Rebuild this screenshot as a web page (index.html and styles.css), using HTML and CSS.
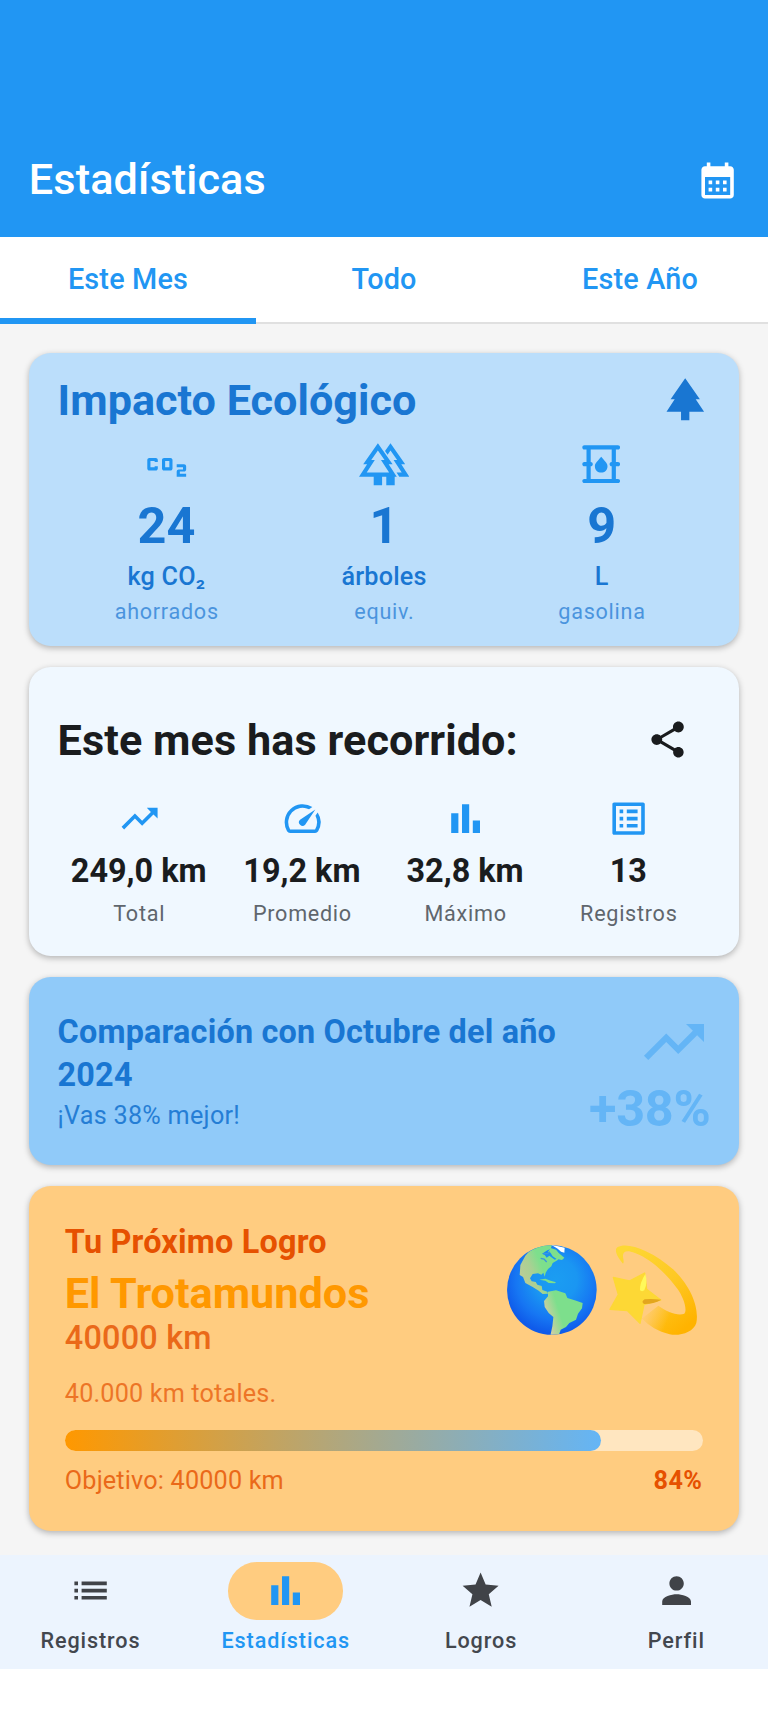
FILE: index.html
```html
<!DOCTYPE html>
<html lang="es">
<head>
<meta charset="utf-8">
<title>Estadísticas</title>
<link rel="stylesheet" href="styles.css">
</head>
<body>
<header class="appbar">
  <h1 class="appbar-title">Estadísticas</h1>
  <svg class="icon" viewBox="0 0 24 24"><path d="M19 4h-1V2h-2v2H8V2H6v2H5c-1.11 0-1.99.9-1.99 2L3 20c0 1.1.89 2 2 2h14c1.1 0 2-.9 2-2V6c0-1.1-.9-2-2-2zm0 16H5V10h14v10zM9 14H7v-2h2v2zm4 0h-2v-2h2v2zm4 0h-2v-2h2v2zm-8 4H7v-2h2v2zm4 0h-2v-2h2v2zm4 0h-2v-2h2v2z"/></svg>
</header>
<nav class="tabs">
  <a class="tab active">Este Mes</a>
  <a class="tab">Todo</a>
  <a class="tab">Este Año</a>
</nav>
<main class="content">
  <section class="card eco">
    <div class="card-head">
      <h2 class="card-title">Impacto Ecológico</h2>
      <svg class="icon icon-l" viewBox="0 0 24 24"><path d="M17 12h2L12 2 5.05 12H7l-3.9 6h6.92v4h3.96v-4H21z"/></svg>
    </div>
    <div class="cols">
      <div class="col">
        <svg class="icon icon-l" viewBox="0 0 24 24"><path d="M14 9h-3c-.55 0-1 .45-1 1v4c0 .55.45 1 1 1h3c.55 0 1-.45 1-1v-4c0-.55-.45-1-1-1zm-.5 4.5h-2v-3h2v3zM8 13v1c0 .55-.45 1-1 1H4c-.55 0-1-.45-1-1v-4c0-.55.45-1 1-1h3c.55 0 1 .45 1 1v1H6.5v-.5h-2v3h2V13H8zm12.500 2.500h-2v1h3V18H17v-2.500c0-.55.45-1 1-1h2v-1h-3V12h3.500c.55 0 1 .45 1 1v1.500c0 .55-.45 1-1 1z"/></svg>
        <div class="eco-value">24</div>
        <div class="eco-unit">kg CO₂</div>
        <div class="eco-label">ahorrados</div>
      </div>
      <div class="col">
        <svg class="icon icon-l" viewBox="0 0 24 24"><path fill-rule="evenodd" d="M16 12L9 2 2 12h1.860L0 18h7v4h4v-4h7l-3.860-6zM3.660 16L7.530 10H5.840L9 5.490 12.160 10h-1.690l3.870 6z"/><path fill-rule="evenodd" d="M20.140 12H22L15 2l-2.610 3.730 1.220 1.740L15 5.490 18.160 10h-1.690l3.870 6h-2.450l1.290 2H24zM13 17.500h4V22h-4z"/></svg>
        <div class="eco-value">1</div>
        <div class="eco-unit">árboles</div>
        <div class="eco-label">equiv.</div>
      </div>
      <div class="col">
        <svg class="icon icon-l" viewBox="0 0 24 24"><path d="M20 13c.55 0 1-.45 1-1s-.45-1-1-1h-1V5h1c.55 0 1-.45 1-1s-.45-1-1-1H4c-.55 0-1 .45-1 1s.45 1 1 1h1v6H4c-.55 0-1 .45-1 1s.45 1 1 1h1v6H4c-.55 0-1 .45-1 1s.45 1 1 1h16c.55 0 1-.45 1-1s-.45-1-1-1h-1v-6h1zm-3 6H7v-6c.55 0 1-.45 1-1s-.45-1-1-1V5h10v6c-.55 0-1 .45-1 1s.45 1 1 1v6z"/><path d="M12 16c1.660 0 3-1.320 3-2.950 0-1.300-.52-1.670-3-4.550-2.470 2.860-3 3.240-3 4.550C9 14.680 10.340 16 12 16z"/></svg>
        <div class="eco-value">9</div>
        <div class="eco-unit">L</div>
        <div class="eco-label">gasolina</div>
      </div>
    </div>
  </section>

  <section class="card month">
    <div class="card-head">
      <h2 class="card-title">Este mes has recorrido:</h2>
      <svg class="icon share" viewBox="0 0 24 24"><path d="M18 16.080c-.76 0-1.440.3-1.960.77L8.910 12.700c.05-.23.09-.46.09-.7s-.04-.47-.09-.7l7.050-4.110c.54.5 1.250.81 2.040.81 1.660 0 3-1.340 3-3s-1.340-3-3-3-3 1.340-3 3c0 .24.04.47.09.7L8.040 9.810C7.500 9.310 6.790 9 6 9c-1.660 0-3 1.340-3 3s1.340 3 3 3c.79 0 1.500-.31 2.040-.81l7.120 4.160c-.05.21-.08.43-.08.65 0 1.610 1.310 2.920 2.920 2.920s2.920-1.310 2.920-2.920-1.310-2.920-2.920-2.920z"/></svg>
    </div>
    <div class="cols">
      <div class="col">
        <svg class="icon" viewBox="0 0 24 24"><path d="M16 6l2.290 2.290-4.880 4.880-4-4L2 16.590 3.410 18l6-6 4 4 6.300-6.290L22 12V6z"/></svg>
        <div class="stat-value">249,0 km</div>
        <div class="stat-label">Total</div>
      </div>
      <div class="col">
        <svg class="icon" viewBox="0 0 24 24"><path d="M20.380 8.570l-1.230 1.850a8 8 0 0 1-.22 7.580H5.070A8 8 0 0 1 15.580 6.850l1.850-1.230A10 10 0 0 0 3.350 19a2 2 0 0 0 1.720 1h13.850a2 2 0 0 0 1.740-1 10 10 0 0 0-.27-10.440zm-9.790 6.840a2 2 0 0 0 2.830 0l5.660-8.490-8.490 5.660a2 2 0 0 0 0 2.830z"/></svg>
        <div class="stat-value">19,2 km</div>
        <div class="stat-label">Promedio</div>
      </div>
      <div class="col">
        <svg class="icon" viewBox="0 0 24 24"><path d="M4 9h4v11H4zm12 4h4v7h-4zm-6-9h4v16h-4z"/></svg>
        <div class="stat-value">32,8 km</div>
        <div class="stat-label">Máximo</div>
      </div>
      <div class="col">
        <svg class="icon" viewBox="0 0 24 24"><path d="M11 7h6v2h-6zm0 4h6v2h-6zm0 4h6v2h-6zM7 7h2v2H7zm0 4h2v2H7zm0 4h2v2H7zM20.100 3H3.900c-.5 0-.9.4-.9.9v16.200c0 .4.4.9.9.9h16.200c.4 0 .9-.5.9-.9V3.900c0-.5-.5-.9-.9-.9zM19 19H5V5h14v14z"/></svg>
        <div class="stat-value">13</div>
        <div class="stat-label">Registros</div>
      </div>
    </div>
  </section>

  <section class="card compare">
    <div class="compare-text">
      <h3 class="compare-title">Comparación con Octubre del año 2024</h3>
      <p class="compare-note">¡Vas 38% mejor!</p>
    </div>
    <div class="compare-figure">
      <svg class="icon icon-xl" viewBox="0 0 24 24"><path d="M16 6l2.290 2.290-4.880 4.880-4-4L2 16.590 3.410 18l6-6 4 4 6.300-6.290L22 12V6z"/></svg>
      <div class="compare-value">+38%</div>
    </div>
  </section>

  <section class="card goal">
    <div class="goal-head">
      <div>
        <h3 class="goal-kicker">Tu Próximo Logro</h3>
        <div class="goal-name">El Trotamundos</div>
        <div class="goal-target">40000 km</div>
      </div>
      <svg class="emoji" viewBox="360 190 600 280">
        <defs>
          <radialGradient id="sea" gradientUnits="userSpaceOnUse" cx="515" cy="300" r="160"><stop offset="0" stop-color="#1b9df2"/><stop offset=".4" stop-color="#1a96f2"/><stop offset=".75" stop-color="#1676f3"/><stop offset="1" stop-color="#0f5bea"/></radialGradient>
          <linearGradient id="north" gradientUnits="userSpaceOnUse" x1="408" y1="275" x2="470" y2="250"><stop offset="0" stop-color="#b9cd96"/><stop offset=".5" stop-color="#aad093"/><stop offset="1" stop-color="#7ddf8c"/></linearGradient>
          <linearGradient id="south" gradientUnits="userSpaceOnUse" x1="492" y1="420" x2="530" y2="408"><stop offset="0" stop-color="#cbcfa2"/><stop offset="1" stop-color="#7ddf8c"/></linearGradient>
          <linearGradient id="trail" gradientUnits="userSpaceOnUse" x1="720" y1="210" x2="910" y2="440"><stop offset="0" stop-color="#fdd835"/><stop offset=".55" stop-color="#fec823"/><stop offset="1" stop-color="#ffb300"/></linearGradient>
          <linearGradient id="fade" gradientUnits="userSpaceOnUse" x1="775" y1="395" x2="850" y2="425"><stop offset="0" stop-color="#ffcc80"/><stop offset="1" stop-color="#ffcc80" stop-opacity="0"/></linearGradient>
          <clipPath id="globe"><circle cx="503.500" cy="331" r="134"/></clipPath>
        </defs>
        <circle cx="503.500" cy="331" r="134.500" fill="url(#sea)"/>
        <g clip-path="url(#globe)">
          <path fill="url(#north)" d="M504 195L470 195 440 210 424 228 409 256 407 286 417 292 424 310 446 322 464 333 476 343 492 342 490 336 475 331 473 319 460 315 455 307 443 305 438 296 446 283 462 281 472 285 478 279 482 291 485 279 492 268 502 260 506 250 520 242 526 234 512 240 496 228 488 234 482 226 474 222 490 212 500 208z"/>
          <path fill="#7ddf8c" d="M500 205L516 210 524 220 541 234 534 241 518 238 506 230 500 220 492 216zM466 300L484 297 500 303 516 308 512 311 494 310 484 303z"/>
          <path fill="#fff" d="M501 195L542 204 541 219 531 216 521 207z"/>
          <path fill="none" stroke="#3b97dc" stroke-width="4" d="M470 236l10 2 8 9M478 222l12 0 8-6"/>
          <path fill="url(#south)" d="M492 336L516 332 544 341 550 355 572 362 596 370 594 386 582 402 576 420 556 430 546 442 530 450 524 468 499 468 505 440 508 412 494 400 482 382 480 364 492 350z"/>
        </g>
        <path fill="url(#trail)" d="M717 252c-18-20-28-42-16-50 28-16 100 8 168 68 60 60 76 122 68 160-8 28-50 40-80 34-34-8-62-24-82-48l48-38c26 18 58 32 78 24 10-10-2-50-22-76-30-42-78-88-126-106-26-10-34-4-36 6-1 8 5 20 0 26z"/>
        <path fill="url(#fade)" d="M774 416l4-40 40-6 50 34-8 62-20-4c-28-10-48-26-66-46z"/>
        <path fill="#fdd835" stroke="#fdd835" stroke-width="4" stroke-linejoin="round" d="M688 293l48 11 46-24 6 49 42 32-50 14-12 56-38-38-52-4 25-44z"/>
        <path fill="#fff95a" d="M784 283q8 26-3 49-7 5-13 0-1-22 16-49z"/>
        <path fill="#e3a61d" d="M832 360q-26 14-52 13-10-7 2-14 20-2 50 1z"/>
      </svg>
    </div>
    <p class="goal-note">40.000 km totales.</p>
    <div class="progress"><div class="progress-fill" style="width:84%"></div></div>
    <div class="goal-foot"><span class="goal-aim">Objetivo: 40000 km</span><strong class="goal-percent">84%</strong></div>
  </section>
</main>
<nav class="bottom-nav">
  <a class="nav-item"><span class="pill"><svg class="icon" viewBox="0 0 24 24"><path d="M3 13h2v-2H3v2zm0 4h2v-2H3v2zm0-8h2V7H3v2zm4 4h14v-2H7v2zm0 4h14v-2H7v2zM7 7v2h14V7H7z"/></svg></span><span>Registros</span></a>
  <a class="nav-item selected"><span class="pill"><svg class="icon" viewBox="0 0 24 24"><path d="M4 9h4v11H4zm12 4h4v7h-4zm-6-9h4v16h-4z"/></svg></span><span>Estadísticas</span></a>
  <a class="nav-item"><span class="pill"><svg class="icon" viewBox="0 0 24 24"><path d="M12 17.270L18.180 21l-1.640-7.030L22 9.240l-7.190-.61L12 2 9.190 8.630 2 9.240l5.460 4.730L5.820 21z"/></svg></span><span>Logros</span></a>
  <a class="nav-item"><span class="pill"><svg class="icon" viewBox="0 0 24 24"><path d="M12 12c2.210 0 4-1.790 4-4s-1.790-4-4-4-4 1.790-4 4 1.790 4 4 4zm0 2c-2.670 0-8 1.340-8 4v2h16v-2c0-2.660-5.330-4-8-4z"/></svg></span><span>Perfil</span></a>
</nav>
</body>
</html>
```
FILE: styles.css
```css
* { box-sizing: border-box; }
body {
  margin: 0;
  width: 768px;
  height: 1713px;
  overflow: hidden;
  display: flex;
  flex-direction: column;
  background: #fff;
  font-family: Roboto, "Liberation Sans", sans-serif;
}
h1, h2, h3, p { margin: 0; }
.icon { display: block; width: 43.2px; height: 43.2px; fill: currentColor; flex: none; }
.icon-l { width: 50.4px; height: 50.4px; }
.icon-xl { width: 72px; height: 72px; }

.appbar {
  height: 237.4px;
  flex: none;
  padding: 122.8px 29px 0 28.8px;
  display: flex;
  justify-content: space-between;
  align-items: center;
  background: #2196f3;
  color: #fff;
}
.appbar-title { font-size: 43.2px; font-weight: 500; line-height: 50px; letter-spacing: .12px; }

.tabs {
  height: 86.4px;
  flex: none;
  display: flex;
  background: #fff;
  border-bottom: 2px solid #e0e0e0;
}
.tab {
  flex: 1;
  height: 86.4px;
  line-height: 84.6px;
  text-align: center;
  font-size: 28.8px;
  font-weight: 500;
  letter-spacing: .18px;
  color: #2196f3;
}
.tab.active { border-bottom: 6px solid #2196f3; }

.content {
  height: 1231.2px;
  flex: none;
  padding: 28.8px 28.8px 0;
  display: flex;
  flex-direction: column;
  gap: 21.2px;
  background: #f5f5f5;
}
.card {
  flex: none;
  border-radius: 21.6px;
  padding: 28.8px;
  box-shadow: 0 2px 6px rgba(0, 0, 0, .28);
}
.card-head { display: flex; justify-content: space-between; align-items: center; }
.card-title { padding-top: 2.4px; font-size: 43.2px; font-weight: 700; line-height: 48px; }
.cols { display: flex; }
.col { flex: 1; display: flex; flex-direction: column; align-items: center; color: #2196f3; white-space: nowrap; }

.eco { height: 293.6px; padding-top: 21.6px; background: #bbdefb; color: #1976d2; }
.eco .cols { margin-top: 14.4px; }
.eco-value { margin-top: 4.6px; font-size: 50.4px; line-height: 64.8px; font-weight: 700; color: #1976d2; }
.eco-unit { font-size: 25.2px; line-height: 36px; font-weight: 500; letter-spacing: .2px; color: #1976d2; }
.eco-label { margin-top: 3px; padding-left: .7px; font-size: 21.6px; line-height: 28.8px; letter-spacing: .72px; color: #1976d2; opacity: .7; }

.month { height: 288.6px; background: #f0f8ff; color: #1a1c1e; }
.month .card-head { height: 86.4px; }
.month .card-title { padding-top: 3px; letter-spacing: .07px; }
.month .cols { margin-top: 14.4px; }
.share { margin-right: 21.6px; }
.stat-value { margin-top: 9.8px; margin-right: 1px; font-size: 32.4px; line-height: 43.2px; font-weight: 700; color: #1a1c1e; }
.stat-label { margin-top: 6.5px; font-size: 21.6px; line-height: 28.8px; letter-spacing: .72px; color: #5f666d; }

.compare { height: 187.8px; display: flex; align-items: center; background: #90caf9; color: #1976d2; }
.compare-text { flex: 1; padding-top: 2.4px; }
.compare-title { font-size: 32.4px; line-height: 43.2px; font-weight: 700; letter-spacing: .18px; }
.compare-note { padding-top: 1px; font-size: 25.2px; line-height: 36px; letter-spacing: .27px; opacity: .9; }
.compare-figure { display: flex; flex-direction: column; align-items: flex-end; color: #64b5f6; }
.compare-value { padding-top: 2px; margin-bottom: -2px; font-size: 50.4px; line-height: 57.6px; font-weight: 700; letter-spacing: -.3px; }

.goal { height: 344.8px; padding: 34.600px 36px 0; background: #ffcc80; color: #e65100; }
.goal-head { display: flex; justify-content: space-between; align-items: center; }
.goal-kicker { font-size: 32.4px; line-height: 43.2px; font-weight: 700; letter-spacing: .2px; }
.goal-name { padding-top: 1px; margin-bottom: -6px; font-size: 43.2px; line-height: 57.6px; font-weight: 700; color: #ff9800; }
.goal-target { font-size: 32.4px; line-height: 43.2px; font-weight: 500; letter-spacing: .22px; opacity: .8; }
.emoji { display: block; width: 200px; height: 93.300px; margin: 0 -1px 1.6px 0; }
.goal-note { margin-top: 16px; font-size: 25.2px; line-height: 36px; letter-spacing: .18px; opacity: .7; }
.progress { margin-top: 17.8px; height: 21.6px; border-radius: 10.8px; background: rgba(255, 255, 255, .5); }
.progress-fill { height: 100%; border-radius: 10.8px; background: linear-gradient(90deg, #ff9800, #64b5f6); }
.goal-foot { margin-top: 11.8px; display: flex; justify-content: space-between; font-size: 25.2px; line-height: 36px; }
.goal-aim { letter-spacing: .18px; opacity: .8; }
.goal-percent { margin-right: .8px; font-weight: 700; letter-spacing: .45px; }

.bottom-nav {
  height: 114px;
  flex: none;
  display: flex;
  gap: 14.4px;
  padding: 7px 1.2px 0 0;
  background: #ecf4fe;
  color: #43474e;
}
.nav-item {
  flex: 1;
  display: flex;
  flex-direction: column;
  align-items: center;
  gap: 7px;
  font-size: 21.6px;
  line-height: 28.8px;
  font-weight: 500;
  letter-spacing: .9px;
  white-space: nowrap;
}
.nav-item .icon { fill: #404348; }
.nav-item.selected .icon { fill: #2196f3; }
.pill { width: 115.2px; height: 57.6px; border-radius: 28.8px; display: flex; align-items: center; justify-content: center; }
.selected { color: #2196f3; }
.selected .pill { background: #ffcc80; }
```
